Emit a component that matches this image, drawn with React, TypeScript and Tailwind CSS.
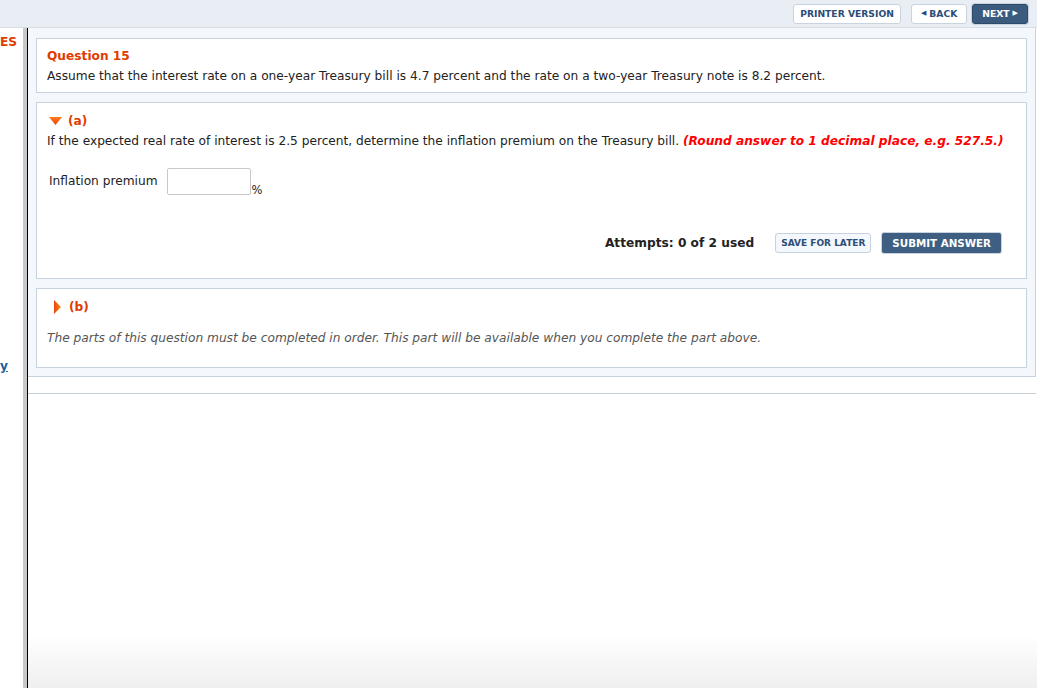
import React from "react";

const font = { fontFamily: '"DejaVu Sans", Verdana, sans-serif' };

function NavButton({ children, dark, wide }: { children: React.ReactNode; dark?: boolean; wide?: boolean }) {
  return (
    <button
      className={`h-[20px] rounded-[3px] text-[9.2px] font-bold leading-none flex items-center gap-[3px] ${
        wide ? "px-[9px]" : "px-[6px]"
      } ${
        dark
          ? "bg-[#3b5b7e] text-white border border-[#2f4a68] shadow-[0_0_0_1px_#c9d3df]"
          : "bg-white text-[#2c4d78] border border-[#c9d3df]"
      }`}
    >
      {children}
    </button>
  );
}

export default function App() {
  return (
    <div className="h-screen w-full bg-white flex flex-col overflow-hidden text-[#222]" style={font}>
      {/* top bar */}
      <div className="h-[28px] shrink-0 bg-[#e9eef4] border-b border-[#d6dde6] flex items-center justify-end pr-[9px]">
        <NavButton>PRINTER VERSION</NavButton>
        <div className="w-[10px]" />
        <NavButton wide>
          <span className="text-[7px]">◀</span>BACK
        </NavButton>
        <div className="w-[5px]" />
        <NavButton dark wide>
          NEXT<span className="text-[7px]">▶</span>
        </NavButton>
      </div>

      <div className="flex flex-1 min-h-0">
        {/* left sidebar edge */}
        <div className="w-[23px] shrink-0 relative overflow-hidden bg-white">
          <div className="absolute left-0 top-[5px] text-[12.2px] font-bold text-[#e03c00] whitespace-nowrap">
            ES
          </div>
          <div className="absolute left-0 top-[329px] text-[12.2px] font-bold text-[#1f5d99] underline whitespace-nowrap">
            y
          </div>
        </div>
        <div className="w-[4px] shrink-0 bg-[#c8c8c8]" />
        <div className="w-[1px] shrink-0 bg-black" />

        {/* main */}
        <div className="flex-1 flex flex-col bg-gradient-to-b from-white from-[92%] to-[#efefef]">
          <div className="bg-[#f4f7fb] border-r border-b border-[#c8d3de] mr-[1px] px-[8px] pt-[10px] pb-[8px] flex flex-col gap-[9px]">
            <div className="bg-white border border-[#c8d3e0] px-[10px] pt-[8px] pb-[6px]">
              <div className="text-[12.2px] font-bold text-[#e03c00] leading-[18px]">Question 15</div>
              <div className="text-[12.2px] leading-[20px] mt-[1px]">
                Assume that the interest rate on a one-year Treasury bill is 4.7 percent and the rate on a two-year Treasury note is 8.2 percent.
              </div>
            </div>

            <div className="bg-white border border-[#c8d3e0] px-[10px] pt-[9px] h-[177px]">
              <div className="flex items-center gap-[6px] leading-[18px] ml-[2px]">
                <svg width="13" height="8" viewBox="0 0 13 8">
                  <defs>
                    <linearGradient id="ga" x1="0" y1="0" x2="0" y2="1">
                      <stop offset="0" stopColor="#ff7a1a" />
                      <stop offset="1" stopColor="#e8450a" />
                    </linearGradient>
                  </defs>
                  <polygon points="0,0 13,0 6.5,8" fill="url(#ga)" />
                </svg>
                <span className="text-[12.2px] font-bold text-[#e03c00]">(a)</span>
              </div>
              <div className="text-[12.2px] leading-[20px] mt-[1px]">
                If the expected real rate of interest is 2.5 percent, determine the inflation premium on the Treasury bill.{" "}
                <span className="font-bold italic text-[#ff0000]">(Round answer to 1 decimal place, e.g. 527.5.)</span>
              </div>
              <div className="flex items-start mt-[17px] ml-[2px]">
                <span className="text-[12.2px] leading-[18px] mt-[4px]">Inflation premium</span>
                <input className="ml-[9px] w-[84px] h-[27px] border border-[#c9c9c9] rounded-[2px] bg-white" />
                <span className="text-[11.5px] mt-[14px] ml-[1px]">%</span>
              </div>
              <div className="flex items-center justify-end mt-[33px] pr-[14px]">
                <span className="text-[12.2px] font-bold">Attempts: 0 of 2 used</span>
                <button className="ml-[21px] h-[20px] px-[5px] bg-[#f4f7fb] border border-[#c7d2de] rounded-[3px] text-[9px] font-bold text-[#2c4d78] leading-none">
                  SAVE FOR LATER
                </button>
                <button className="ml-[10px] h-[22px] px-[10px] bg-[#3e5f82] border border-[#c9d3df] rounded-[3px] text-[10.3px] font-bold text-white leading-none">
                  SUBMIT ANSWER
                </button>
              </div>
            </div>

            <div className="bg-white border border-[#c8d3e0] px-[10px] pt-[9px] h-[80px]">
              <div className="flex items-center gap-[8px] leading-[18px] ml-[7px]">
                <svg width="7" height="14" viewBox="0 0 7 14">
                  <defs>
                    <linearGradient id="gb" x1="0" y1="0" x2="1" y2="0">
                      <stop offset="0" stopColor="#e8450a" />
                      <stop offset="1" stopColor="#ff8a1a" />
                    </linearGradient>
                  </defs>
                  <polygon points="0,0 7,7 0,14" fill="url(#gb)" />
                </svg>
                <span className="text-[12.2px] font-bold text-[#e03c00]">(b)</span>
              </div>
              <div className="text-[12.2px] italic text-[#555] leading-[20px] mt-[12px]">
                The parts of this question must be completed in order. This part will be available when you complete the part above.
              </div>
            </div>
          </div>
          <div className="h-[17px] border-b border-[#c8d0d8] mr-[1px]" />
        </div>
      </div>
    </div>
  );
}
